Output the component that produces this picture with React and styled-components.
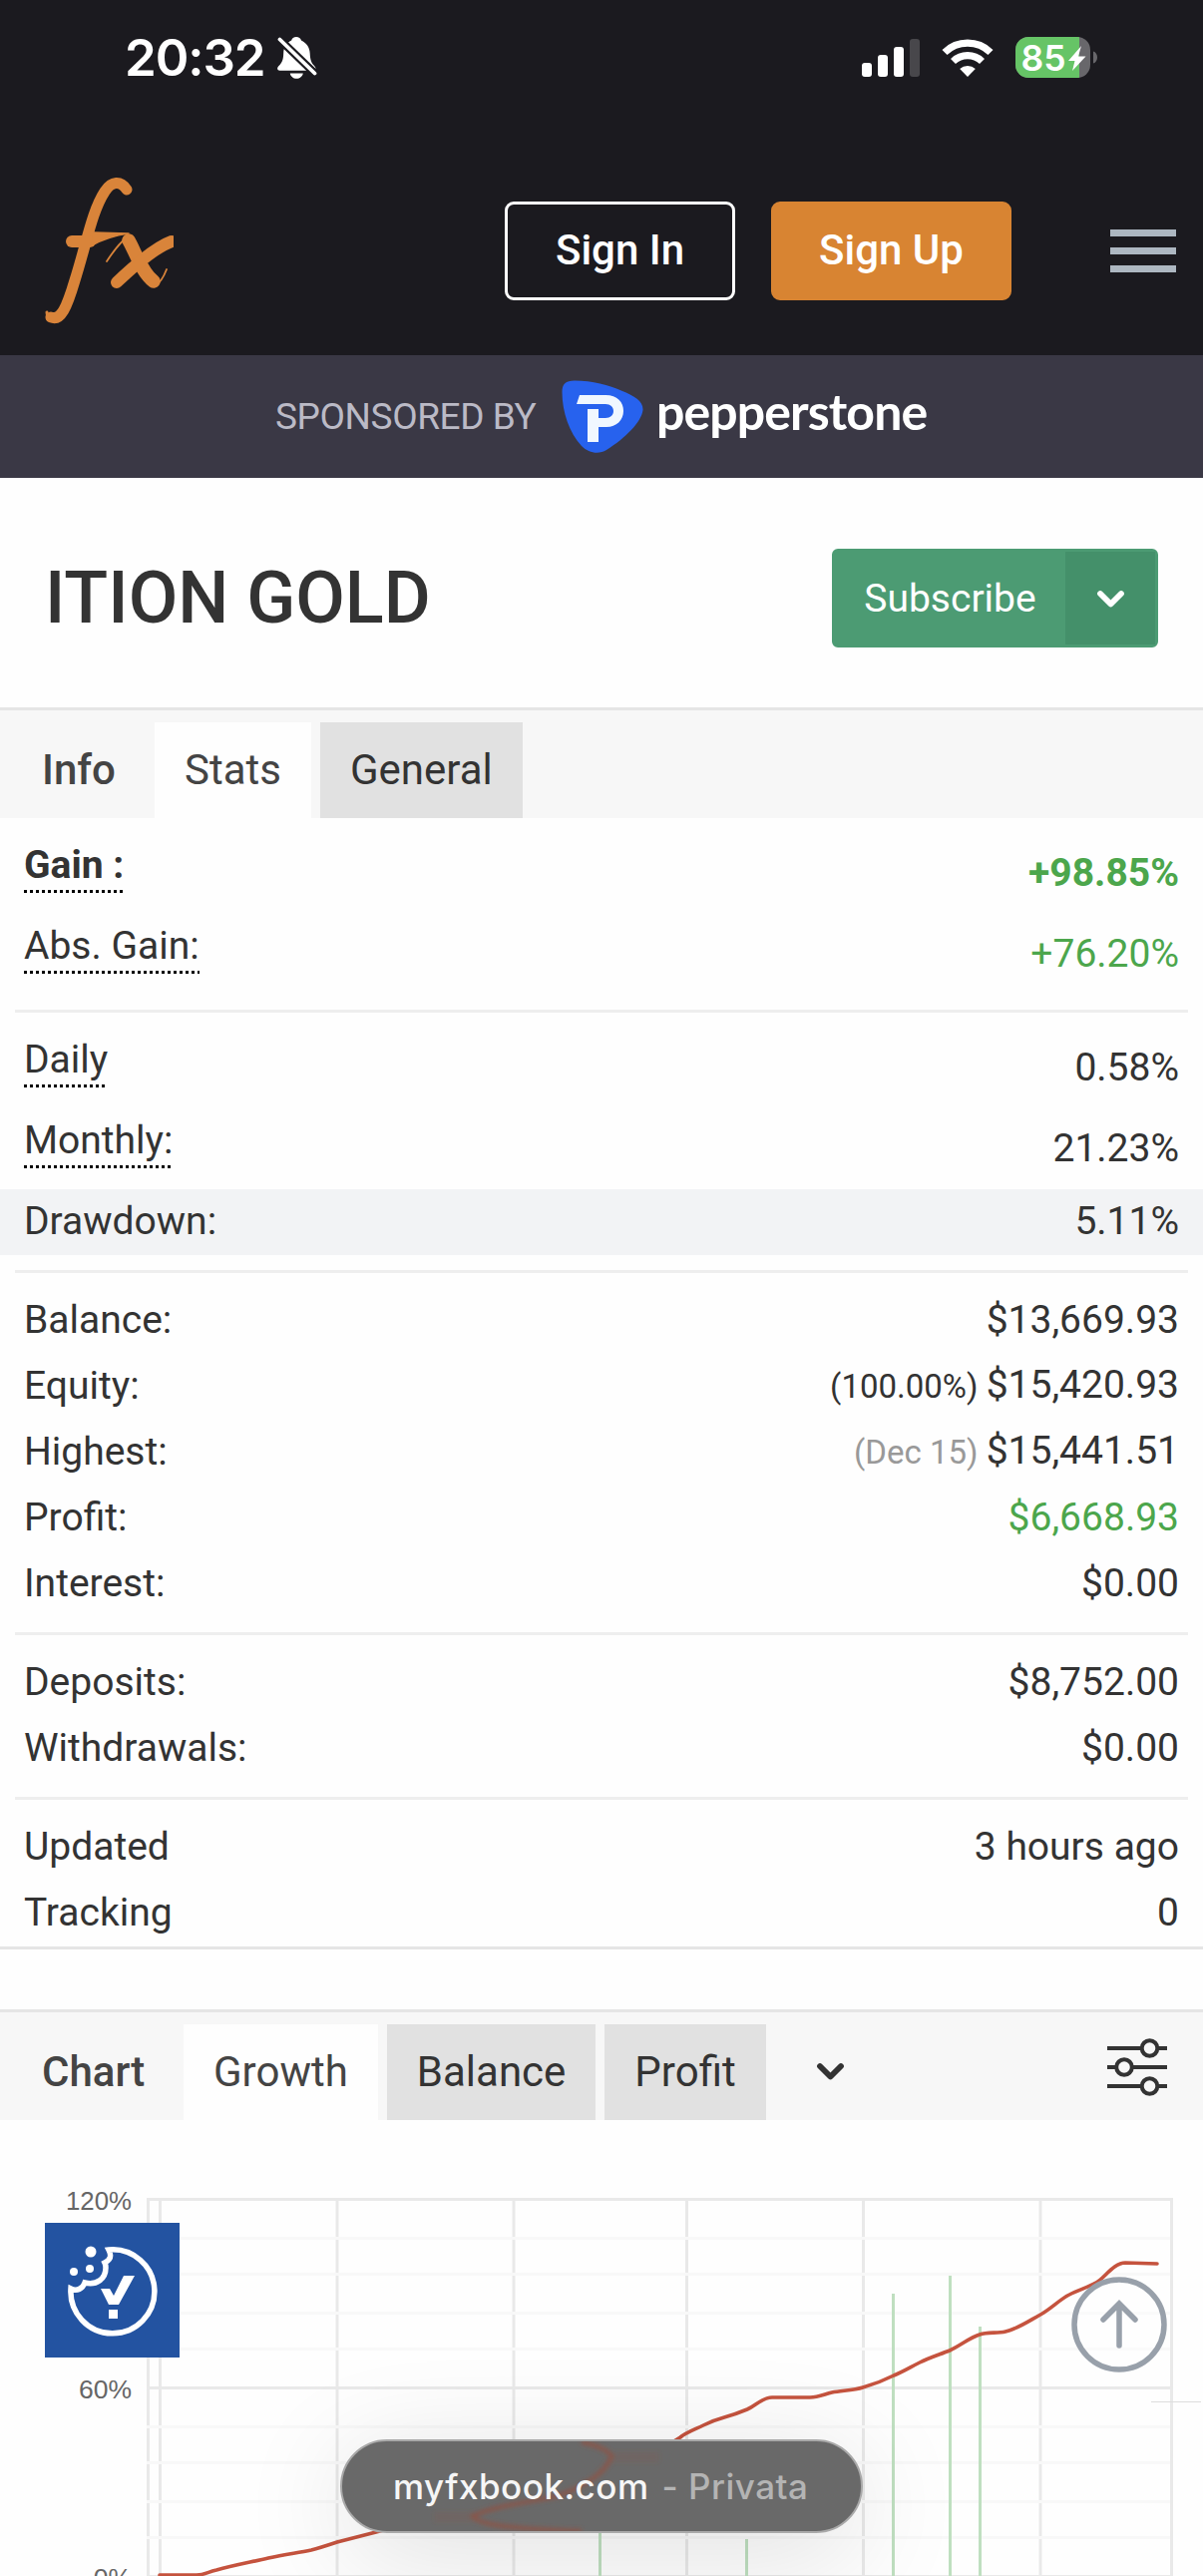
import React from 'react';
import styled, { createGlobalStyle, css } from 'styled-components';

const green = '#4ca64c';
const line = '#e5e5e5';

const GlobalStyle = createGlobalStyle`
    * {
        box-sizing: border-box;
    }

    body {
        margin: 0;
        background: #fff;
        color: #333;
        font-family: Roboto, "Liberation Sans", sans-serif;
    }
`

const Page = styled.div`
    position: relative;
    width: 1206px;
    height: 2582px;
    overflow: hidden;
    background: #fefefe;
`

const StatusBar = styled.div`
    display: flex;
    align-items: center;
    height: 116px;
    padding: 0 106px 0 125px;
    background: #1b1a1f;
    color: #fff;
`

const Clock = styled.div`
    flex: 1;
    display: flex;
    align-items: center;
    gap: 13px;
    font: 600 51px/60px Inter, sans-serif;
    letter-spacing: -1.1px;
`

const StatusIcons = styled.div`
    display: flex;
    align-items: center;
    gap: 22px;
`

const Header = styled.header`
    display: flex;
    align-items: center;
    height: 240px;
    padding: 30px 27px 0 36px;
    background: #1b1a1f;

    > svg:first-child {
        margin-right: auto;
    }
`

const HeaderButton = styled.button`
    width: ${props => props.$width}px;
    height: 99px;
    margin-right: ${props => props.$gap}px;
    padding: 0 0 2px;
    border: 3px solid ${props => props.$filled ? '#d88432' : '#fff'};
    border-radius: 9px;
    background: ${props => props.$filled ? '#d88432' : 'transparent'};
    color: #fff;
    font: 500 42px Roboto, sans-serif;
`

const Burger = styled.div`
    display: flex;
    flex-direction: column;
    justify-content: space-between;
    width: 66px;
    height: 43px;

    span {
        height: 7px;
        background: #adb7c1;
    }
`

const Sponsor = styled.div`
    display: flex;
    align-items: center;
    height: 123px;
    padding-left: 276px;
    background: #3a3845;
`

const SponsorText = styled.span`
    width: 286px;
    color: #bbbac6;
    font-size: 37px;
    letter-spacing: -0.4px;
    white-space: nowrap;
`

const SponsorName = styled.span`
    margin: -12px 0 0 12px;
    color: #fff;
    font: 700 50px Lato, sans-serif;
    letter-spacing: -0.9px;
`

const TitleRow = styled.div`
    display: flex;
    align-items: center;
    justify-content: space-between;
    height: 230px;
    padding: 10px 45px 0 45px;
`

const Title = styled.h1`
    margin: 0;
    font-size: 72px;
    font-weight: 500;
`

const Subscribe = styled.div`
    display: flex;
    width: 327px;
    height: 99px;
    border: 3px solid #4c9b73;
    border-radius: 6px;
    background: #4c9b73;
    color: #fff;
    font-size: 39px;
    line-height: 94px;
    text-align: center;
`

const SubscribeLabel = styled.div`
    width: 231px;
`

const SubscribeArrow = styled.div`
    flex: 1;
    display: flex;
    align-items: center;
    justify-content: center;
    padding-top: 2px;
    background: #44906a;
`

const TabBar = styled.div`
    display: flex;
    align-items: flex-end;
    height: 111px;
    border-top: 3px solid ${line};
    background: #f7f7f7;
    font-size: 42px;
    line-height: 96px;
`

const TabHeading = styled.div`
    width: ${props => props.$width}px;
    padding-left: 42px;
    color: #444;
    font-weight: 500;
`

const Tab = styled.div`
    height: 96px;
    margin-right: 9px;
    padding: 0 30px;
    background: ${props => props.$active ? '#fefefe' : '#e1e1e1'};
    color: ${props => props.$active ? '#444' : '#333'};
`

const TabChevron = styled.div`
    display: flex;
    align-items: center;
    flex: 1;
    height: 96px;
    padding: 0 0 2px 41px;
`

const TabTools = styled.div`
    display: flex;
    align-items: center;
    height: 96px;
    padding: 0 35px 10px 0;
`

const Stats = styled.div`
    padding-top: 15px;
    border-bottom: 3px solid ${line};
    font-size: 39px;
    line-height: 64px;
`

const Row = styled.div`
    display: flex;
    justify-content: space-between;
    align-items: center;
    height: ${props => props.$tall ? 81 : 66}px;
    padding: 0 24px 2px;
    background: ${props => props.$shaded ? '#f2f3f5' : 'transparent'};
    font-weight: ${props => props.$bold ? 700 : 400};
`

const Label = styled.span`
    ${props => props.$dotted && css`
        align-self: flex-start;
        height: 60px;
        background: repeating-linear-gradient(90deg, #000 0 3px, transparent 3px 6px) 0 57px / 100% 3px no-repeat;
    `}
`

const Value = styled.span`
    color: ${props => props.$positive ? green : '#333'};
`

const Note = styled.span`
    color: ${props => props.$muted ? '#999' : '#333'};
    font-size: 33px;
`

const Divider = styled.div`
    height: 3px;
    margin: 15px;
    background: #eee;
`

const Spacer = styled.div`
    height: 60px;
`

const Chart = styled.svg`
    display: block;
    font-family: "Liberation Sans", Arial, sans-serif;
`

const CookieBadge = styled.div`
    position: absolute;
    left: 45px;
    top: 2228px;
    width: 135px;
    height: 135px;
    background: #2353a1;
`

const ScrollTop = styled.div`
    position: absolute;
    left: 1074px;
    top: 2282px;
    width: 96px;
    height: 96px;
`

const AddressPill = styled.div`
    position: absolute;
    left: 341px;
    top: 2445px;
    width: 524px;
    height: 94px;
    overflow: hidden;
    border: 2px solid #a9a9a9;
    border-radius: 47px;
    background: #696969;

    svg {
        display: block;
    }
`

const PillShadow = styled.div`
    position: absolute;
    left: 341px;
    top: 2445px;
    width: 524px;
    height: 94px;
    border-radius: 47px;
    box-shadow: 0 20px 110px rgba(0, 0, 0, 0.13);
`

const PillText = styled.div`
    position: absolute;
    left: 51px;
    top: 0;
    color: #f6f6f6;
    font: 500 35px/90px Inter, sans-serif;
    letter-spacing: 0.5px;
    white-space: nowrap;

    span {
        margin-left: 13px;
        color: #b4b4b4;
        letter-spacing: 0.5px;
    }
`

const groups = [
    [
        { label: 'Gain :', value: '+98.85%', dotted: true, bold: true, positive: true },
        { label: 'Abs. Gain:', value: '+76.20%', dotted: true, positive: true },
    ],
    [
        { label: 'Daily', value: '0.58%', dotted: true },
        { label: 'Monthly:', value: '21.23%', dotted: true },
        { label: 'Drawdown:', value: '5.11%', shaded: true },
    ],
    [
        { label: 'Balance:', value: '$13,669.93' },
        { label: 'Equity:', value: '$15,420.93', note: '(100.00%)' },
        { label: 'Highest:', value: '$15,441.51', note: '(Dec 15)', muted: true },
        { label: 'Profit:', value: '$6,668.93', positive: true },
        { label: 'Interest:', value: '$0.00' },
    ],
    [
        { label: 'Deposits:', value: '$8,752.00' },
        { label: 'Withdrawals:', value: '$0.00' },
    ],
    [
        { label: 'Updated', value: '3 hours ago' },
        { label: 'Tracking', value: '0' },
    ],
]

const Bell = () => (
    <svg width="40" height="44" viewBox="0 0 40 44" fill="#fff">
        <path d="M19 1c-2.500 0-4.300 1.400-4.800 3.400C9 6.800 6.400 11 6.200 17.500 6 24.500 4.500 27 1.500 30c-2.500 2.600-1.200 4.700 1 4.700h33.500c2.400 0 3.400-2.200 1.300-4.500-3-3-4.300-5.700-4.600-12.700C32.500 11 29 6.800 24 4.400 23.400 2.400 21.500 1 19 1zM12.800 37.500c.6 3.200 3.200 5.300 6.500 5.300s5.900-2.100 6.500-5.300z"/>
        <path d="M2.500 3.500 37.500 37.500" stroke="#1b1a1f" strokeWidth="8"/>
        <path d="M2.500 3.500 37.500 37.500" stroke="#fff" strokeWidth="3.800" strokeLinecap="round"/>
    </svg>
)

const Signal = () => (
    <svg width="58" height="38" viewBox="0 0 58 38" fill="#fff">
        <rect x="0" y="24" width="10" height="14" rx="3"/>
        <rect x="16" y="16" width="10" height="22" rx="3"/>
        <rect x="32" y="8" width="10" height="30" rx="3"/>
        <rect x="48" y="0" width="10" height="38" rx="3" fill="#48474b"/>
    </svg>
)

const Wifi = () => (
    <svg width="52" height="38" viewBox="0 0 52 38">
        <g fill="none" stroke="#fff" strokeWidth="7.200">
            <path d="M3 13.500a33 33 0 0 1 46 0"/>
            <path d="M11.500 22.500a21 21 0 0 1 29 0"/>
        </g>
        <path d="M26 38l-7.800-8a11.500 11.500 0 0 1 15.600 0z" fill="#fff"/>
    </svg>
)

const Battery = () => (
    <svg width="82" height="42" viewBox="0 0 82 42">
        <defs>
            <clipPath id="cell"><rect width="75" height="41" rx="13"/></clipPath>
        </defs>
        <g clipPath="url(#cell)">
            <rect width="75" height="41" fill="#68676b"/>
            <rect width="64" height="41" fill="#66c466"/>
        </g>
        <path d="M78 14.500c2.500 .8 4 3 4 6s-1.500 5.200-4 6z" fill="#68676b"/>
        <text x="5.500" y="33.500" fill="#fff" fontFamily="Inter, sans-serif" fontWeight="600" fontSize="35.500">85</text>
        <path d="M66 9 53 24h6.500L57 34 70.500 19.500H63z" fill="#fff"/>
    </svg>
)

const FxLogo = () => (
    <svg width="138" height="160" viewBox="0 0 138 160" fill="none" stroke="#d9843a" strokeLinecap="round" strokeLinejoin="round">
        <path d="M91 19C85 10 76 10 69 21 56 41 51 72 39 110 31 137 25 151 15 147" strokeWidth="11"/>
        <path d="M36 71H54" strokeWidth="12"/>
        <path d="M58 62 93 63Q72 66 56 75z" fill="#d9843a" strokeWidth="1.500"/>
        <path d="M93 70C99 80 106 102 118 111" strokeWidth="13.500"/>
        <path d="M136 71C122 76 100 94 81 112" strokeWidth="12"/>
        <path d="M92 66Q82 74 71 91M119 116Q126 112 131 99" strokeWidth="1.800"/>
        <path d="M11 142 12 149" strokeWidth="3"/>
    </svg>
)

const PepperMark = () => (
    <svg width="84" height="74" viewBox="0 0 84 74">
        <path d="M1.500 12C1.500 4 5 .5 14 .5 32 .5 48 5 62 11 74 16 83 21 82.500 30 81 42 65 58 46 70 38 75 28 73 21 66 9 53 1.500 32 1.500 12z" fill="#2762ee"/>
        <path d="M19 15H45C57 15 63 22 63 31S56 47 46 47H38V62H27V29H38V38H45C50 38 53 35 53 31S50 24 45 24H16z" fill="#f0f7ff"/>
    </svg>
)

const Chevron = ({ color }) => (
    <svg width="29" height="19" viewBox="0 0 29 19" fill="none">
        <path d="M4 4 14.500 14.500 25 4" stroke={color} strokeWidth="5.800" strokeLinecap="round" strokeLinejoin="round"/>
    </svg>
)

const Sliders = () => (
    <svg width="62" height="58" viewBox="0 0 62 58" fill="#f7f7f7" stroke="#333" strokeWidth="4">
        <path d="M1 10h60M1 29h60M1 48h60"/>
        <circle cx="43.500" cy="10" r="7.800"/>
        <circle cx="18" cy="29" r="7.800"/>
        <circle cx="43.500" cy="48" r="7.800"/>
    </svg>
)

const curve = 'M160 456H197C205 456 208 453 217 451 235 446 252 443 269 439S298 434 312 431C320 429 329 426 338 423L377 413C440 396 500 395 560 375S640 345 682 318C688 313 697 310 705 306Q715 301 726 298T749 290C758 286 764 278 774 278H812C820 278 826 275 834 273 845 271 856 271 865 268 876 265 886 261 896 256 906 252 912 248 922 243 932 238 942 235 952 231 963 226 972 218 982 215 990 212 999 214 1008 212 1021 209 1032 201 1043 195S1062 180 1072 175C1083 169 1095 167 1103 160S1119 143 1128 143L1160 144'

const GrowthChart = () => (
    <Chart width="1206" height="457" viewBox="0 0 1206 457">
        <g fill="#e9e9e9">
            {[147, 159, 336.5, 513.5, 687, 864, 1041.5, 1173].map(x => <rect key={x} x={x} y="78" width="3" height="380"/>)}
        </g>
        <g fill="#f8f8f8">
            {[117, 153, 192, 228, 306, 342, 381, 417].map(y => <rect key={y} x="147" y={y} width="1026" height="3"/>)}
        </g>
        <g fill="#e9e9e9">
            {[78, 267, 456].map(y => <rect key={y} x="147" y={y} width="1029" height="3"/>)}
        </g>
        <g fill="#bfdfc0">
            {[[600, 400], [747, 420], [894, 174], [951, 156], [981, 207]].map(([x, y]) => (
                <rect key={x} x={x} y={y} width="3" height={457 - y}/>
            ))}
        </g>
        <path d={curve} fill="none" stroke="#c5533e" strokeWidth="3.600" strokeLinecap="round"/>
        <g fill="#666" fontSize="26.500" textAnchor="end">
            <text x="132" y="90" textLength="66" lengthAdjust="spacingAndGlyphs">120%</text>
            <text x="132" y="279">60%</text>
            <text x="132" y="468">0%</text>
        </g>
        <rect x="1154" y="282" width="50" height="1" fill="#ddd"/>
    </Chart>
)

const CookieIcon = () => (
    <svg width="135" height="135" viewBox="0 0 135 135" fill="none">
        <path d="M64 27a42 42 0 1 1-38 39c6 3 12 0 14-6 12 3 21-4 21-15 0-2-.5-4-1-5 6-3 7-7 4-13z" stroke="#fff" strokeWidth="5.500"/>
        <g fill="#fff">
            <circle cx="46" cy="29" r="5.500"/>
            <circle cx="29" cy="49" r="4"/>
            <circle cx="45" cy="46" r="4"/>
            <path d="M56 66h9l4 7 10-20h11L74 82H64zM64 87h9v9h-9z"/>
        </g>
    </svg>
)

// the red curve refracted through the glass of the address pill
const PillGlow = () => (
    <svg width="520" height="90" viewBox="0 0 520 90" fill="none" stroke="#94503f">
        <defs>
            <filter id="soft" x="-20%" y="-20%" width="140%" height="140%"><feGaussianBlur stdDeviation="2.200"/></filter>
        </defs>
        <g filter="url(#soft)">
            <path d="M240 1C256 4 266 8 270 15 266 28 248 44 215 55 180 62 148 66 131 75 136 84 170 88 240 90" strokeWidth="4.500" opacity=".7"/>
            <path d="M270 16H318M92 76H133" strokeWidth="11" opacity=".15"/>
        </g>
    </svg>
)

const StatRow = ({ label, value, note, dotted, bold, positive, muted, shaded }) => (
    <Row $tall={dotted} $bold={bold} $shaded={shaded}>
        <Label $dotted={dotted}>{label}</Label>
        <Value $positive={positive}>
            {note && <Note $muted={muted}>{note} </Note>}
            {value}
        </Value>
    </Row>
)

const App = () => {
    return (
        <Page>
            <GlobalStyle />
            <StatusBar>
                <Clock>20:32 <Bell /></Clock>
                <StatusIcons>
                    <Signal />
                    <Wifi />
                    <Battery />
                </StatusIcons>
            </StatusBar>
            <Header>
                <FxLogo />
                <HeaderButton $width={231} $gap={36}>Sign In</HeaderButton>
                <HeaderButton $filled $width={241} $gap={99}>Sign Up</HeaderButton>
                <Burger><span /><span /><span /></Burger>
            </Header>
            <Sponsor>
                <SponsorText>SPONSORED BY</SponsorText>
                <PepperMark />
                <SponsorName>pepperstone</SponsorName>
            </Sponsor>
            <TitleRow>
                <Title>ITION GOLD</Title>
                <Subscribe>
                    <SubscribeLabel>Subscribe</SubscribeLabel>
                    <SubscribeArrow><Chevron color="#fff" /></SubscribeArrow>
                </Subscribe>
            </TitleRow>
            <TabBar>
                <TabHeading $width={155}>Info</TabHeading>
                <Tab $active>Stats</Tab>
                <Tab>General</Tab>
            </TabBar>
            <Stats>
                {groups.map((rows, i) => (
                    <React.Fragment key={i}>
                        {i > 0 && <Divider />}
                        {rows.map(row => <StatRow key={row.label} {...row} />)}
                    </React.Fragment>
                ))}
            </Stats>
            <Spacer />
            <TabBar>
                <TabHeading $width={184}>Chart</TabHeading>
                <Tab $active>Growth</Tab>
                <Tab>Balance</Tab>
                <Tab>Profit</Tab>
                <TabChevron><Chevron color="#333" /></TabChevron>
                <TabTools><Sliders /></TabTools>
            </TabBar>
            <GrowthChart />
            <CookieBadge><CookieIcon /></CookieBadge>
            <ScrollTop>
                <svg width="96" height="96" viewBox="0 0 96 96" fill="none" stroke="#98a0aa" strokeWidth="5.500">
                    <circle cx="48" cy="48" r="45" fill="#fff" fillOpacity=".3"/>
                    <path d="M48 69V27M32 43 48 27 64 43" strokeLinecap="round"/>
                </svg>
            </ScrollTop>
            <PillShadow />
            <AddressPill>
                <PillGlow />
                <PillText>myfxbook.com<span>- Privata</span></PillText>
            </AddressPill>
        </Page>
    )
}

export default App;
